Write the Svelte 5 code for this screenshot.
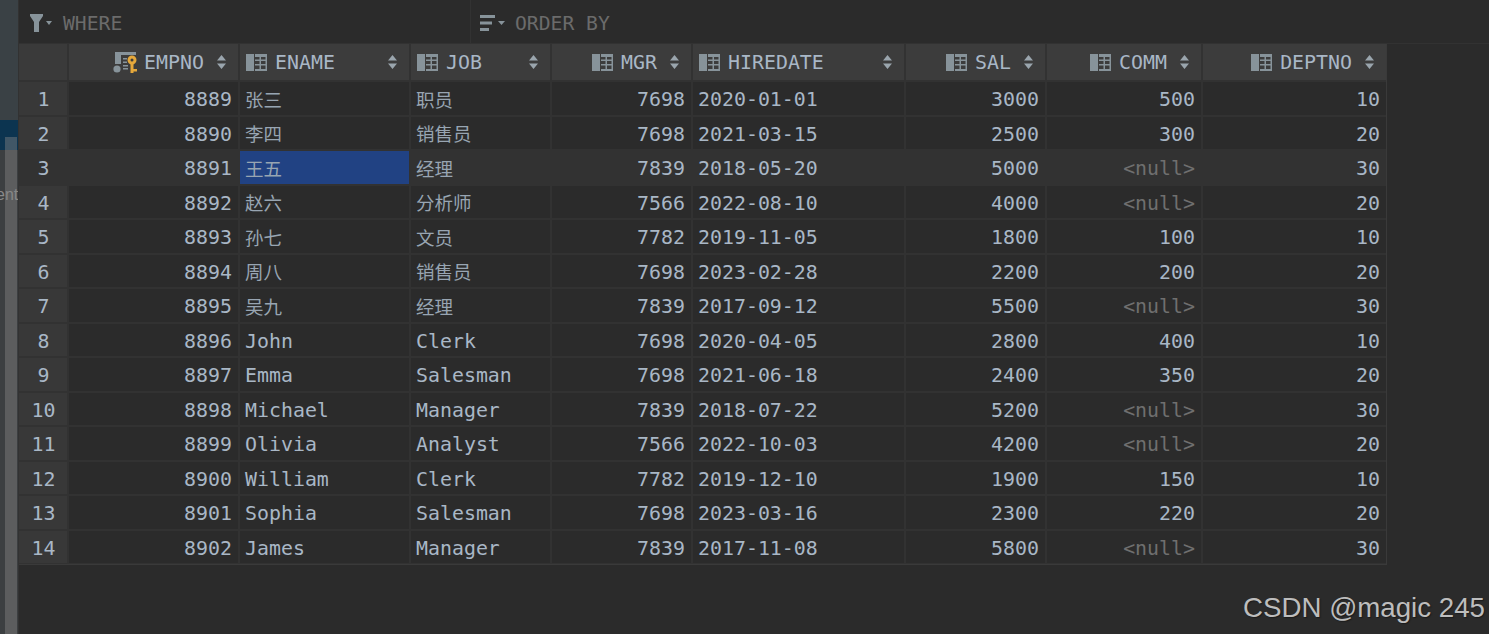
<script>
  const columns = [
    { key: 'empno', label: 'EMPNO', num: true, pk: true },
    { key: 'ename', label: 'ENAME' },
    { key: 'job', label: 'JOB' },
    { key: 'mgr', label: 'MGR', num: true },
    { key: 'hiredate', label: 'HIREDATE' },
    { key: 'sal', label: 'SAL', num: true },
    { key: 'comm', label: 'COMM', num: true },
    { key: 'deptno', label: 'DEPTNO', num: true }
  ];

  const rows = [
    [8889, '张三', '职员', 7698, '2020-01-01', 3000, 500, 10],
    [8890, '李四', '销售员', 7698, '2021-03-15', 2500, 300, 20],
    [8891, '王五', '经理', 7839, '2018-05-20', 5000, null, 30],
    [8892, '赵六', '分析师', 7566, '2022-08-10', 4000, null, 20],
    [8893, '孙七', '文员', 7782, '2019-11-05', 1800, 100, 10],
    [8894, '周八', '销售员', 7698, '2023-02-28', 2200, 200, 20],
    [8895, '吴九', '经理', 7839, '2017-09-12', 5500, null, 30],
    [8896, 'John', 'Clerk', 7698, '2020-04-05', 2800, 400, 10],
    [8897, 'Emma', 'Salesman', 7698, '2021-06-18', 2400, 350, 20],
    [8898, 'Michael', 'Manager', 7839, '2018-07-22', 5200, null, 30],
    [8899, 'Olivia', 'Analyst', 7566, '2022-10-03', 4200, null, 20],
    [8900, 'William', 'Clerk', 7782, '2019-12-10', 1900, 150, 10],
    [8901, 'Sophia', 'Salesman', 7698, '2023-03-16', 2300, 220, 20],
    [8902, 'James', 'Manager', 7839, '2017-11-08', 5800, null, 30]
  ];

  let selectedRow = 2;
  let selectedCol = 1;

  const isCjk = (value) => /[^\x00-\x7f]/.test(String(value));
</script>

<div class="page">
  <div class="side">
    <div class="side-top"></div>
    <div class="side-blue"></div>
    <div class="side-low"><span class="side-text">ent</span></div>
    <div class="side-thumb"></div>
  </div>

  <div class="main">
    <div class="filters">
      <div class="filter where">
        <svg class="filter-icon" width="22" height="18" viewBox="0 0 22 18">
          <path d="M0 0H13V2L9 8V18H4V8L0 2Z" fill="#87939a" />
          <path d="M16 7H22L19 11Z" fill="#87939a" />
        </svg>
        <span>WHERE</span>
      </div>
      <div class="filter order">
        <svg class="filter-icon" width="25" height="16" viewBox="0 0 25 16">
          <path d="M0 0H15V3H0ZM0 6.500H12V9.500H0ZM0 13H9V16H0Z" fill="#87939a" />
          <path d="M18 6H25L21.500 10Z" fill="#87939a" />
        </svg>
        <span>ORDER BY</span>
      </div>
    </div>

    <div class="grid">
      <div class="corner"></div>
      {#each columns as col}
        <div class="head" class:num={col.num}>
          {#if col.pk}
            <svg class="col-icon key" width="25" height="21" viewBox="0 0 25 21">
              <path d="M2 0H8V12H2Z" fill="#87939a" />
              <circle cx="4" cy="17" r="3.600" fill="#87939a" />
              <path d="M8 0H23V3H8ZM10 6H14V7.500H10ZM10 9.500H14V11H10ZM10 13H15V14.500H10ZM10 16H15V17.500H10Z" fill="#87939a" />
              <path fill-rule="evenodd" d="M19 3.500A4.500 4.500 0 1 1 19 12.500A4.500 4.500 0 1 1 19 3.500ZM19 6.500A1.500 1.500 0 1 0 19 9.500A1.500 1.500 0 1 0 19 6.500Z" fill="#e5a83b" />
              <path d="M17.500 12H20.500V21H17.500ZM20.500 17H24V19.500H20.500Z" fill="#e5a83b" />
            </svg>
          {:else}
            <svg class="col-icon" width="21" height="17" viewBox="0 0 21 17">
              <path d="M0 0H8V17H0Z" fill="#87939a" />
              <path d="M9 0H21V3H9ZM9 5.500H21V7H9ZM9 10H21V11.500H9ZM9 15H21V17H9ZM13.500 3H15V15H13.500ZM19.500 3H21V15H19.500Z" fill="#87939a" />
            </svg>
          {/if}
          <span class="head-label">{col.label}</span>
          <svg class="sort" class:spread={!col.num} width="9" height="14" viewBox="0 0 9 14">
            <path d="M4.500 0L9 5.500H0ZM4.500 14L0 8.500H9Z" fill="#9aa5ad" />
          </svg>
        </div>
      {/each}

      {#each rows as row, r}
        <div class="row-num" class:current={r === selectedRow}>{r + 1}</div>
        {#each row as value, c}
          <div
            class="cell"
            class:num={columns[c].num}
            class:current={r === selectedRow}
            class:selected={r === selectedRow && c === selectedCol}
            class:nil={value === null}
            class:cjk={isCjk(value)}
          >{value === null ? '<null>' : value}</div>
        {/each}
      {/each}
    </div>
  </div>

  <div class="watermark">CSDN @magic 245</div>
</div>

<style>
  :global(body) {
    margin: 0;
    background: #2b2b2b;
  }

  .page {
    position: relative;
    display: flex;
    height: 634px;
    overflow: hidden;
    background: #2b2b2b;
    font-family: "DejaVu Sans Mono", "Noto Sans CJK SC", monospace;
    font-size: 19.900px;
    color: #a9b7c6;
  }

  .side {
    position: relative;
    flex: 0 0 18px;
    display: flex;
    flex-direction: column;
    background: #3c3f41;
    overflow: hidden;
    border-right: 1px solid #323232;
  }

  .side-top {
    height: 120px;
    background: #3a4145;
  }

  .side-blue {
    height: 30px;
    background: #0c3450;
  }

  .side-low {
    flex: 1;
    background: #3c3f41;
  }

  .side-text {
    position: absolute;
    top: 186px;
    left: -4px;
    font-family: "Liberation Sans", sans-serif;
    font-size: 16px;
    color: #8a8a8a;
  }

  .side-thumb {
    position: absolute;
    top: 137px;
    bottom: 0;
    left: 5px;
    width: 12px;
    background: rgba(130, 130, 130, 0.45);
  }

  .main {
    flex: 1;
    min-width: 0;
  }

  .filters {
    display: flex;
    height: 43px;
    border-bottom: 1px solid #323232;
  }

  .filter {
    display: flex;
    align-items: center;
    gap: 11px;
    padding: 3px 0 0 11px;
    color: #6b6b6b;
    font-size: 19.700px;
  }

  .filter.where {
    width: 440px;
    border-right: 1px solid #323232;
  }

  .filter.order {
    gap: 10px;
    padding-left: 9px;
  }

  .filter-icon {
    flex: none;
  }

  .grid {
    display: grid;
    width: max-content;
    grid-template-columns: 48px 169px 169px 139px 139px 211px 139px 154px 183px;
    grid-template-rows: 36px repeat(14, 32.500px);
    gap: 2px;
    padding-bottom: 1px;
    border-right: 1px solid #3a3a3a;
    border-bottom: 1px solid #3a3a3a;
    background: #323232;
  }

  .corner {
    background: #3a3a3a;
  }

  .head {
    display: flex;
    align-items: center;
    padding: 0 0 0 6px;
    background: #3c3c3c;
  }

  .head.num {
    justify-content: flex-end;
    padding: 0 12px 0 0;
  }

  .col-icon {
    flex: none;
    margin-right: 8px;
  }

  .col-icon.key {
    margin-right: 6px;
  }

  .sort {
    flex: none;
    margin-left: 13px;
  }

  .sort.spread {
    margin-left: auto;
    margin-right: 12px;
  }

  .row-num {
    display: flex;
    align-items: center;
    justify-content: center;
    background: #383838;
    padding: 3px 0 0 1px;
  }

  .row-num.current {
    background: #323232;
  }

  .cell {
    display: flex;
    align-items: center;
    padding: 3px 6px 0 5px;
    background: #2b2b2b;
    white-space: nowrap;
  }

  .cell.num {
    justify-content: flex-end;
  }

  .cell.current {
    background: #323232;
  }

  .cell.selected {
    background: #214283;
  }

  .cell.nil {
    color: #6f6f6f;
  }

  .cell.cjk {
    padding-top: 1px;
    font-size: 18.500px;
    color: #98a5b2;
  }

  .watermark {
    position: absolute;
    right: 4px;
    bottom: 10px;
    font-family: "Liberation Sans", sans-serif;
    font-size: 27.700px;
    color: #bdbdbd;
    text-shadow: 1px 1px 1px #1c1c1c;
  }
</style>
